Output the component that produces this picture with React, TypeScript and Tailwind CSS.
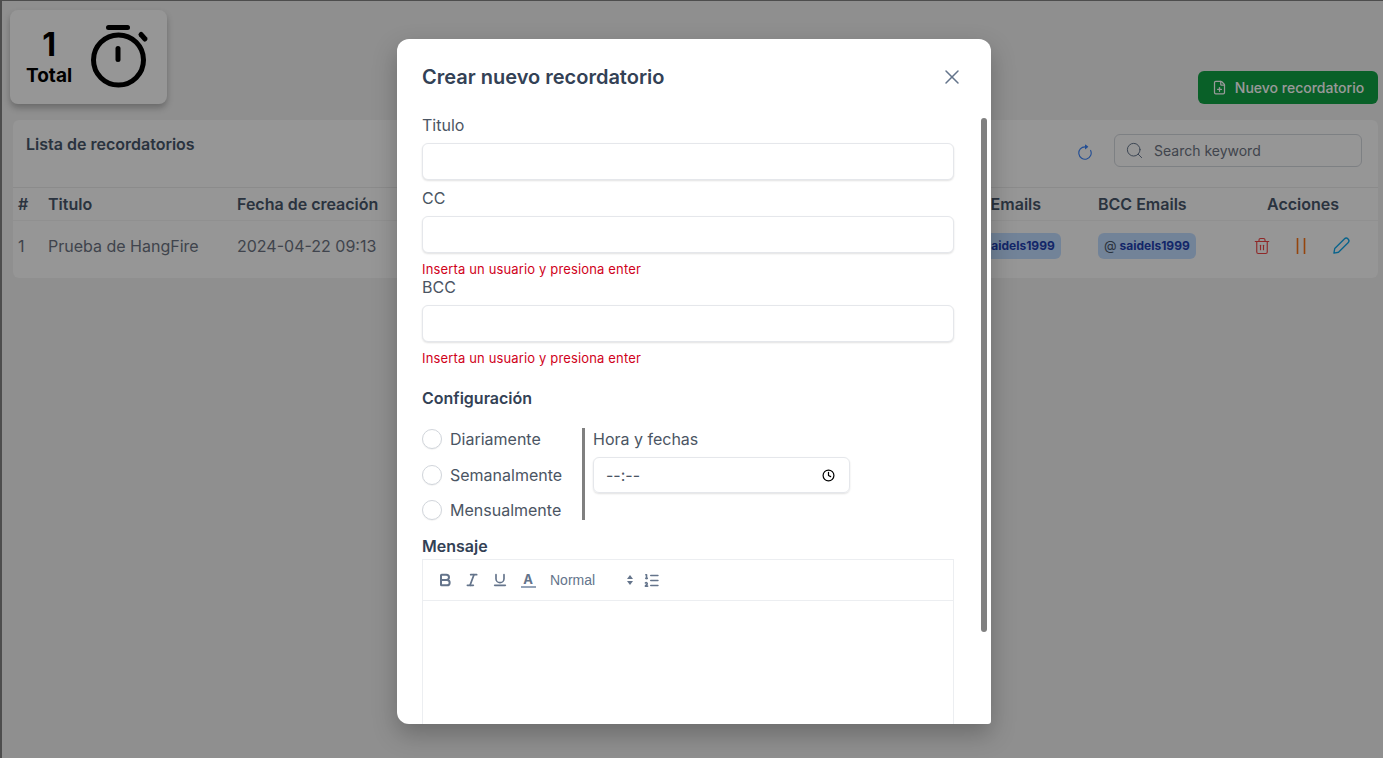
import { Bold, Clock, FilePlus, Italic, ListOrdered, Search, Trash2, Underline, X } from "lucide-react";
import { BsArrowClockwise } from "react-icons/bs";

const columns = "grid grid-cols-[30px_189px_726px_135px_169px_1fr] items-center pl-[5px]";

function TimerIcon() {
  return (
    <svg viewBox="0 0 64 68" className="w-[64px] h-[68px]" fill="none" stroke="#000" strokeWidth="5" strokeLinecap="round">
      <circle cx="30.5" cy="37" r="25" />
      <path d="M20.5 4.5h19" />
      <path d="M30 25.5v11" />
      <path d="M53 11.5l4 4.5" />
    </svg>
  );
}

function PencilIcon() {
  return (
    <svg viewBox="0 0 24 24" className="w-[20px] h-[20px]" fill="none" stroke="#0ea5e9" strokeWidth="1.6" strokeLinejoin="round">
      <path d="M3.5 20.5l1-5.5L16 3.5a2.6 2.6 0 0 1 4.5 4.5L9 19.5z" />
    </svg>
  );
}

function PauseIcon() {
  return (
    <svg viewBox="0 0 10 16" className="w-[10px] h-[16px]" stroke="#f97316" strokeWidth="1.6">
      <path d="M1.5 0v16M8.5 0v16" />
    </svg>
  );
}

function Chip() {
  return (
    <span className="inline-flex items-center w-fit h-[26px] px-[6px] gap-[3px] rounded-md bg-[#bfdbfe] text-[12px] font-bold text-[#1e40af]">
      <span className="font-normal text-[13px] text-[#475569]">@</span>saidels1999
    </span>
  );
}

function Field({ label, hint }: { label: string; hint?: boolean }) {
  return (
    <div className={hint ? "mb-[-2px]" : "mb-[6px]"}>
      <label className="block text-[16px] leading-[24px] text-[#4b5563]">{label}</label>
      <div className="mt-[6px] h-[37px] rounded-md border border-[#e5e7eb] bg-white shadow-[0_1px_2px_rgba(0,0,0,0.12)]" />
      {hint && <p className="mt-[8px] text-[13px] leading-[16px] tracking-[0.15px] text-[#d0021b]">Inserta un usuario y presiona enter</p>}
    </div>
  );
}

function Radio({ label }: { label: string }) {
  return (
    <div className="flex items-center gap-[8px] h-[20px]">
      <span className="w-[20px] h-[20px] rounded-full border border-[#d1d5db] bg-white shadow-[0_1px_1px_rgba(0,0,0,0.05)]" />
      <span className="text-[16px] text-[#4b5563]">{label}</span>
    </div>
  );
}

export default function App() {
  return (
    <div className="relative h-[758px] overflow-hidden bg-[#eeeeee] border-l-2 border-t border-[#4d4d4d] font-['Inter','Liberation_Sans',sans-serif]">
      <div className="flex items-start justify-between pl-[8px] pr-[5px] pt-[9px]">
        <div className="flex items-center w-[157px] h-[94px] pl-[16px] gap-[16px] rounded-lg bg-[#fafafa] shadow-[0_4px_6px_rgba(0,0,0,0.25)]">
          <div className="flex flex-col items-center mt-[2px] text-black">
            <span className="text-[32px] leading-[36px] font-bold">1</span>
            <span className="text-[19px] leading-[26px] font-bold">Total</span>
          </div>
          <TimerIcon />
        </div>
        <button className="mt-[61px] flex items-center justify-center gap-[8px] w-[180px] h-[33px] rounded-md bg-[#10a044] text-[14px] font-medium text-white">
          <FilePlus className="w-[15px] h-[15px]" />
          Nuevo recordatorio
        </button>
      </div>

      <section className="mt-[16px] ml-[11px] mr-[5px] h-[158px] rounded-md bg-[#fafafa]">
        <div className="flex items-start justify-between h-[68px] border-b border-[#e8e8e8] pl-[13px] pr-[16px]">
          <h2 className="mt-[13px] text-[16px] leading-[22px] font-semibold text-[#475569]">Lista de recordatorios</h2>
          <div className="flex items-center mt-[14px] gap-[20px]">
            <BsArrowClockwise className="w-[18px] h-[18px] mt-[5px] text-[#3b82f6]" />
            <div className="flex items-center w-[248px] h-[33px] rounded-md border border-[#d1d5db] pl-[10px] gap-[10px]">
              <Search className="w-[19px] h-[19px] text-[#64748b]" strokeWidth={1.25} />
              <span className="text-[14px] text-[#6b7280]">Search keyword</span>
            </div>
          </div>
        </div>
        <div className={`${columns} h-[33px] border-b border-[#f0f0f0] text-[16px] font-semibold text-[#475569]`}>
          <span>#</span>
          <span>Titulo</span>
          <span>Fecha de creación</span>
          <span>CC Emails</span>
          <span>BCC Emails</span>
          <span>Acciones</span>
        </div>
        <div className={`${columns} h-[50px] text-[16px] text-[#6b7280]`}>
          <span>1</span>
          <span>Prueba de HangFire</span>
          <span>2024-04-22 09:13</span>
          <Chip />
          <Chip />
          <div className="flex items-center -ml-[14px]">
            <Trash2 className="w-[18px] h-[18px] text-[#ef4444]" strokeWidth={1.5} />
            <span className="ml-[25px]"><PauseIcon /></span>
            <span className="ml-[25px]"><PencilIcon /></span>
          </div>
        </div>
      </section>

      {/* backdrop */}
      <div className="absolute inset-0 bg-black/40" />

      {/* modal */}
      <div className="absolute inset-0 flex justify-start pl-[395px] pt-[38px]">
        <div className="relative w-[594px] h-[685px] overflow-hidden rounded-xl rounded-br-[3px] bg-white shadow-[0_10px_25px_rgba(0,0,0,0.25)]">
          <div className="flex items-center justify-between h-[74px] pt-[2px] pl-[25px] pr-[27px]">
            <h3 className="text-[20px] font-semibold text-[#334155]">Crear nuevo recordatorio</h3>
            <X className="w-[24px] h-[24px] text-[#64748b]" strokeWidth={1.5} />
          </div>
          <div className="w-[532px] ml-[25px]">
            <Field label="Titulo" />
            <Field label="CC" hint />
            <Field label="BCC" hint />
            <h4 className="mt-[22px] text-[16px] leading-[24px] font-semibold text-[#334155]">Configuración</h4>
            <div className="flex mt-[18px]">
              <div className="flex flex-col gap-[15.5px] w-[160px] pt-[1px] h-[92px]">
                <Radio label="Diariamente" />
                <Radio label="Semanalmente" />
                <Radio label="Mensualmente" />
              </div>
              <div className="w-[3px] h-[92px] bg-[#808080]" />
              <div className="pl-[8px]">
                <div className="text-[16px] leading-[22px] text-[#4b5563]">Hora y fechas</div>
                <div className="flex items-center justify-between w-[257px] h-[36px] mt-[7px] pl-[12px] pr-[14px] rounded-md border border-[#e5e7eb] shadow-[0_1px_2px_rgba(0,0,0,0.12)]">
                  <span className="text-[16px] text-[#4b5563]">--:--</span>
                  <Clock className="w-[13px] h-[13px] text-black" strokeWidth={2.25} />
                </div>
              </div>
            </div>
            <h4 className="mt-[14px] text-[16px] leading-[24px] font-semibold text-[#334155]">Mensaje</h4>
            <div className="mt-[1px] h-[200px] border border-[#eceef1]">
              <div className="flex items-center h-[41px] pl-[14px] border-b border-[#eceef1] text-[#64748b]">
                <Bold className="w-[16px] h-[16px]" strokeWidth={3} />
                <Italic className="w-[16px] h-[16px] ml-[11px]" strokeWidth={2.5} />
                <Underline className="w-[16px] h-[16px] ml-[12px]" strokeWidth={2.5} />
                <span className="ml-[12.5px] w-[15px] border-b-2 border-[#94a3b8] text-center text-[13px] leading-[14px] font-bold">A</span>
                <span className="ml-[14.5px] w-[76px] text-[14px] font-['Liberation_Sans',sans-serif]">Normal</span>
                <svg viewBox="0 0 8 12" className="w-[8px] h-[12px]" fill="#64748b">
                  <path d="M4 1l3 4H1zM4 11L1 7h6z" />
                </svg>
                <ListOrdered className="w-[17px] h-[17px] ml-[9px]" strokeWidth={2.25} />
              </div>
            </div>
          </div>
          {/* scrollbar */}
          <div className="absolute right-[4px] top-[79px] w-[6px] h-[514px] rounded-full bg-[#808080]" />
        </div>
      </div>
    </div>
  );
}
